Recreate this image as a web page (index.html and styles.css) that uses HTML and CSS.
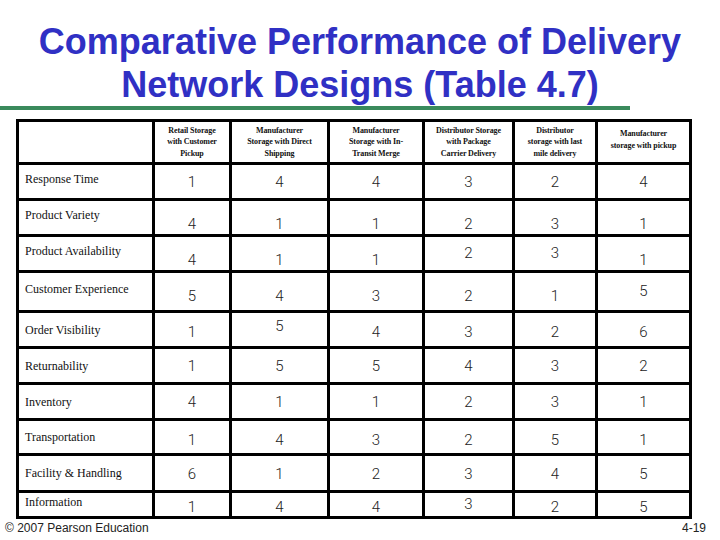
FILE: index.html
```html
<!DOCTYPE html>
<html>
<head>
<meta charset="utf-8">
<link rel="stylesheet" href="styles.css">
</head>
<body>
<div class="slide">
  <h1 class="title">Comparative Performance of Delivery<br>Network Designs (Table 4.7)</h1>
  <div class="rule"></div>
  <table class="grid">
    <colgroup>
      <col class="c0"><col class="c1"><col class="c2"><col class="c3"><col class="c4"><col class="c5"><col class="c6">
    </colgroup>
    <tr class="r-head">
      <th></th>
      <th>Retail Storage<br>with Customer<br>Pickup</th>
      <th>Manufacturer<br>Storage with Direct<br>Shipping</th>
      <th>Manufacturer<br>Storage with In-<br>Transit Merge</th>
      <th>Distributor Storage<br>with Package<br>Carrier Delivery</th>
      <th>Distributor<br>storage with last<br>mile delivery</th>
      <th class="up">Manufacturer<br>storage with pickup</th>
    </tr>
    <tr class="r1">
      <td class="lab up">Response Time</td>
      <td class="dn1">1</td><td class="dn1">4</td><td class="dn1">4</td><td class="dn1">3</td><td class="dn1">2</td><td class="dn1">4</td>
    </tr>
    <tr class="r2">
      <td class="lab up">Product Variety</td>
      <td class="dn7">4</td><td class="dn7">1</td><td class="dn7">1</td><td class="dn7">2</td><td class="dn7">3</td><td class="dn7">1</td>
    </tr>
    <tr class="r3">
      <td class="lab up">Product Availability</td>
      <td class="dn7">4</td><td class="dn7">1</td><td class="dn7">1</td><td>2</td><td>3</td><td class="dn7">1</td>
    </tr>
    <tr class="r4">
      <td class="lab up">Customer Experience</td>
      <td class="dn5">5</td><td class="dn5">4</td><td class="dn5">3</td><td class="dn5">2</td><td class="dn5">1</td><td>5</td>
    </tr>
    <tr class="r5">
      <td class="lab">Order Visibility</td>
      <td class="dn3">1</td><td class="up3">5</td><td class="dn3">4</td><td class="dn3">3</td><td class="dn3">2</td><td class="dn3">6</td>
    </tr>
    <tr class="r6">
      <td class="lab">Returnability</td>
      <td class="dn1">1</td><td class="dn1">5</td><td class="dn1">5</td><td class="dn1">4</td><td class="dn1">3</td><td class="dn1">2</td>
    </tr>
    <tr class="r7">
      <td class="lab">Inventory</td>
      <td class="dn1">4</td><td class="dn1">1</td><td class="dn1">1</td><td class="dn1">2</td><td class="dn1">3</td><td class="dn1">1</td>
    </tr>
    <tr class="r8">
      <td class="lab">Transportation</td>
      <td class="dn3">1</td><td class="dn3">4</td><td class="dn3">3</td><td class="dn3">2</td><td class="dn3">5</td><td class="dn3">1</td>
    </tr>
    <tr class="r9">
      <td class="lab">Facility &amp; Handling</td>
      <td class="dn1">6</td><td class="dn1">1</td><td class="dn1">2</td><td class="dn1">3</td><td class="dn1">4</td><td class="dn1">5</td>
    </tr>
    <tr class="r10">
      <td class="lab up">Information</td>
      <td class="dn3">1</td><td class="dn3">4</td><td class="dn3">4</td><td>3</td><td class="dn3">2</td><td class="dn3">5</td>
    </tr>
  </table>
  <div class="foot">
    <span class="copy">© 2007 Pearson Education</span>
    <span class="page">4-19</span>
  </div>
</div>
</body>
</html>
```
FILE: styles.css
```css
html, body {
  margin: 0;
  padding: 0;
  background: #ffffff;
}

.slide {
  width: 720px;
  height: 540px;
  overflow: hidden;
  display: flex;
  flex-direction: column;
}

.title {
  margin: 20px 0 0;
  font-family: "Liberation Sans", Arial, sans-serif;
  font-weight: bold;
  font-size: 36px;
  line-height: 43px;
  color: #3030c4;
  text-align: center;
}

.rule {
  width: 630px;
  height: 4px;
  background: #3a8a5c;
}

.grid {
  margin: 9px 0 0 16px;
  width: 676px;
  table-layout: fixed;
  border-collapse: collapse;
  border: 3px solid #000;
}

.grid th,
.grid td {
  border: 3px solid #000;
  padding: 0;
  text-align: center;
  vertical-align: middle;
  color: #111;
}

.c0 { width: 136px; }
.c1 { width: 77px; }
.c2 { width: 98px; }
.c3 { width: 95px; }
.c4 { width: 90px; }
.c5 { width: 83px; }
.c6 { width: 94px; }

.grid th {
  font-family: "Liberation Serif", "Times New Roman", serif;
  font-weight: bold;
  font-size: 8px;
  line-height: 11.5px;
  letter-spacing: -0.1px;
}

.grid td {
  font-family: Roboto, "Liberation Sans", Arial, sans-serif;
  font-weight: 300;
  font-size: 15px;
  line-height: 17px;
  color: #222;
}

.grid td.lab {
  font-family: "Liberation Serif", "Times New Roman", serif;
  font-weight: normal;
  font-size: 12px;
  line-height: 14px;
  text-align: left;
  padding-left: 6px;
  color: #111;
}

.r-head { height: 43px; }
.r1 { height: 36px; }
.r2 { height: 36px; }
.r3 { height: 36px; }
.r4 { height: 40px; }
.r5 { height: 36px; }
.r6 { height: 36px; }
.r7 { height: 36px; }
.r8 { height: 35px; }
.r9 { height: 37px; }
.r10 { height: 25px; }

.grid .up { padding-bottom: 5px; }
.grid .up3 { padding-bottom: 6px; }
.grid .dn1 { padding-top: 2px; }
.grid .dn3 { padding-top: 6px; }
.grid .dn5 { padding-top: 10px; }
.grid .dn7 { padding-top: 14px; }

.foot {
  display: flex;
  justify-content: space-between;
  align-items: baseline;
  padding: 2px 14px 0 5px;
  font-family: "Liberation Sans", Arial, sans-serif;
  font-size: 12px;
  line-height: 14px;
  color: #222;
}
```
